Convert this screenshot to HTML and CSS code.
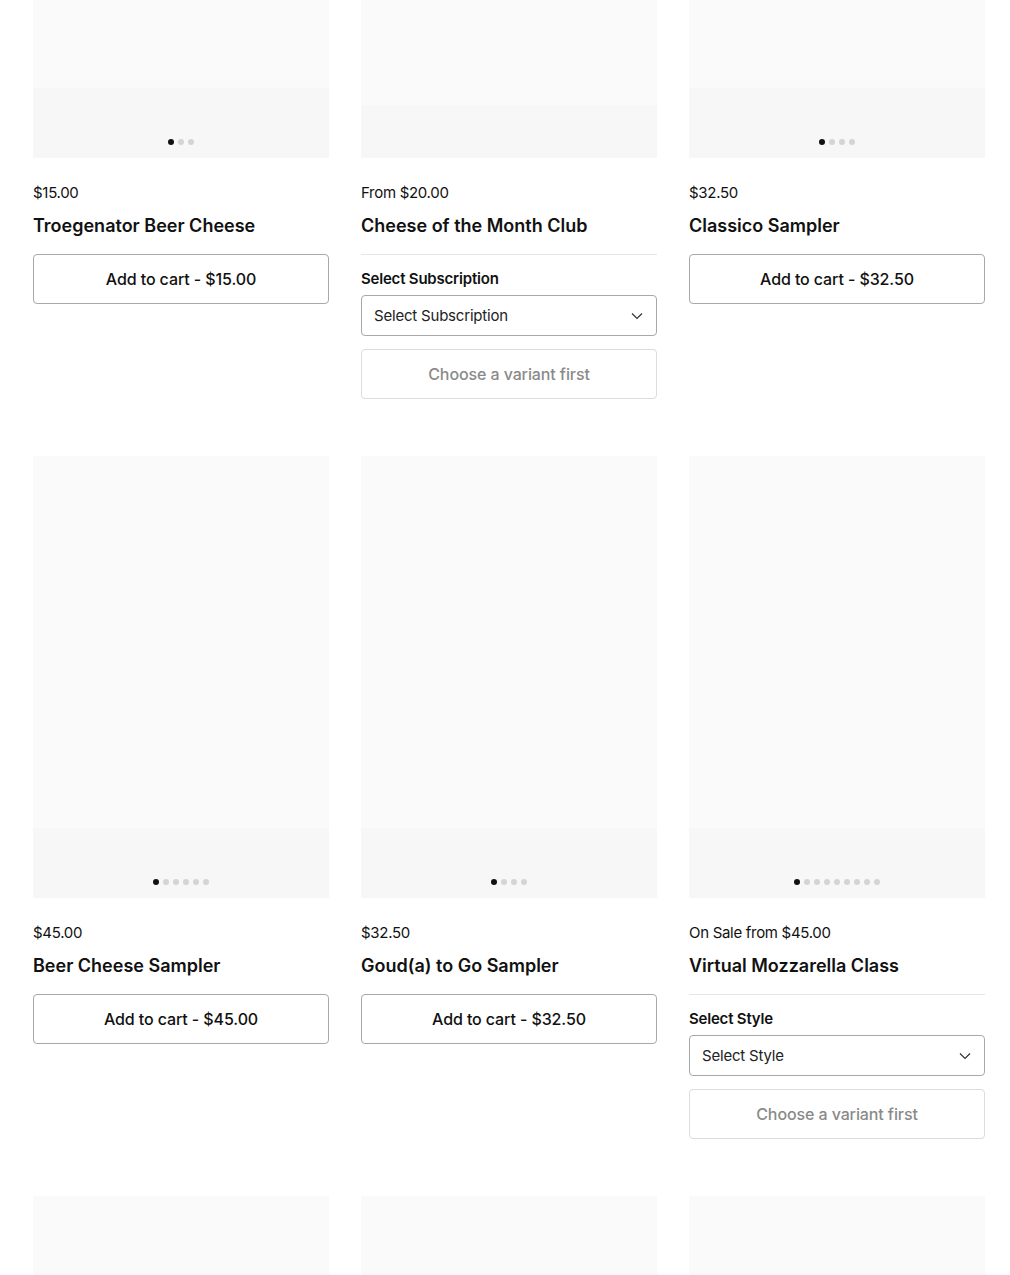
FILE: index.html
```html
<!DOCTYPE html>
<html lang="en">
<head>
<meta charset="utf-8">
<title>Products</title>
<link rel="stylesheet" href="styles.css">
</head>
<body>
<main class="grid">
  <article class="card">
    <div class="media"><div class="dots"><span class="dot on"></span><span class="dot"></span><span class="dot"></span></div></div>
    <div class="info">
      <p class="price">$15.00</p>
      <h3 class="title">Troegenator Beer Cheese</h3>
      <button class="btn">Add to cart - $15.00</button>
    </div>
  </article>
  <article class="card">
    <div class="media media-alt"></div>
    <div class="info">
      <p class="price">From $20.00</p>
      <h3 class="title">Cheese of the Month Club</h3>
      <hr class="rule">
      <label class="label">Select Subscription</label>
      <div class="select"><span>Select Subscription</span><svg class="chev" viewBox="0 0 12 8" width="12" height="8"><path d="M1 1.5 6 6.5 11 1.5" fill="none" stroke="#333" stroke-width="1.2"/></svg></div>
      <button class="btn btn-disabled">Choose a variant first</button>
    </div>
  </article>
  <article class="card">
    <div class="media"><div class="dots"><span class="dot on"></span><span class="dot"></span><span class="dot"></span><span class="dot"></span></div></div>
    <div class="info">
      <p class="price">$32.50</p>
      <h3 class="title">Classico Sampler</h3>
      <button class="btn">Add to cart - $32.50</button>
    </div>
  </article>

  <article class="card">
    <div class="media"><div class="dots"><span class="dot on"></span><span class="dot"></span><span class="dot"></span><span class="dot"></span><span class="dot"></span><span class="dot"></span></div></div>
    <div class="info">
      <p class="price">$45.00</p>
      <h3 class="title">Beer Cheese Sampler</h3>
      <button class="btn">Add to cart - $45.00</button>
    </div>
  </article>
  <article class="card">
    <div class="media"><div class="dots"><span class="dot on"></span><span class="dot"></span><span class="dot"></span><span class="dot"></span></div></div>
    <div class="info">
      <p class="price">$32.50</p>
      <h3 class="title">Goud(a) to Go Sampler</h3>
      <button class="btn">Add to cart - $32.50</button>
    </div>
  </article>
  <article class="card">
    <div class="media"><div class="dots"><span class="dot on"></span><span class="dot"></span><span class="dot"></span><span class="dot"></span><span class="dot"></span><span class="dot"></span><span class="dot"></span><span class="dot"></span><span class="dot"></span></div></div>
    <div class="info">
      <p class="price">On Sale from $45.00</p>
      <h3 class="title">Virtual Mozzarella Class</h3>
      <hr class="rule">
      <label class="label">Select Style</label>
      <div class="select"><span>Select Style</span><svg class="chev" viewBox="0 0 12 8" width="12" height="8"><path d="M1 1.5 6 6.5 11 1.5" fill="none" stroke="#333" stroke-width="1.2"/></svg></div>
      <button class="btn btn-disabled">Choose a variant first</button>
    </div>
  </article>

  <article class="card">
    <div class="media"></div>
  </article>
  <article class="card">
    <div class="media"></div>
  </article>
  <article class="card">
    <div class="media"></div>
  </article>
</main>
</body>
</html>
```

FILE: styles.css
```css
* { box-sizing: border-box; }
html, body { margin: 0; padding: 0; background: #fff; overflow: hidden; }
body {
  font-family: Inter, "Noto Sans", "Liberation Sans", sans-serif;
  color: #111;
  height: 1275px;
}
.grid {
  display: grid;
  grid-template-columns: repeat(3, 296px);
  column-gap: 32px;
  row-gap: 57px;
  margin: -284px 0 0 33px;
  align-items: start;
}
.card { display: flex; flex-direction: column; }
.media {
  position: relative;
  height: 442px;
  background: linear-gradient(#fafafa 0, #fafafa 372px, #f7f7f7 372px, #f7f7f7 100%);
}
.media-alt {
  background: linear-gradient(#fafafa 0, #fafafa 389px, #f7f7f7 389px, #f7f7f7 100%);
}
.dots {
  position: absolute;
  left: 0; right: 0; bottom: 13px;
  display: flex;
  justify-content: center;
  gap: 4px;
}
.dot { width: 6px; height: 6px; border-radius: 50%; background: #d4d4d4; }
.dot.on { background: #111; }
.info { display: flex; flex-direction: column; }
.price {
  margin: 24px 0 0;
  font-size: 15px;
  line-height: 22px;
  letter-spacing: -0.3px;
  color: #111;
}
.title {
  margin: 10px 0 0;
  font-size: 18px;
  line-height: 24px;
  font-weight: 600;
  letter-spacing: 0;
}
.btn {
  margin-top: 16px;
  height: 50px;
  width: 100%;
  border: 1px solid #a8a8a8;
  border-radius: 4px;
  background: #fff;
  font-family: inherit;
  font-size: 16px;
  font-weight: 500;
  letter-spacing: -0.1px;
  color: #111;
}
.btn-disabled {
  margin-top: 13px;
  border-color: #dcdcdc;
  color: #8a8a8a;
}
.rule {
  margin: 16px 0 0;
  border: 0;
  border-top: 1px solid #e6e6e6;
  height: 0;
}
.label {
  margin-top: 14px;
  font-size: 15px;
  line-height: 20px;
  font-weight: 600;
  letter-spacing: -0.2px;
}
.select {
  margin-top: 6px;
  height: 41px;
  border: 1px solid #a8a8a8;
  border-radius: 4px;
  display: flex;
  align-items: center;
  justify-content: space-between;
  padding: 0 13px 0 12px;
  font-size: 15px;
  letter-spacing: -0.2px;
  color: #222;
}
.chev { display: block; }
```
